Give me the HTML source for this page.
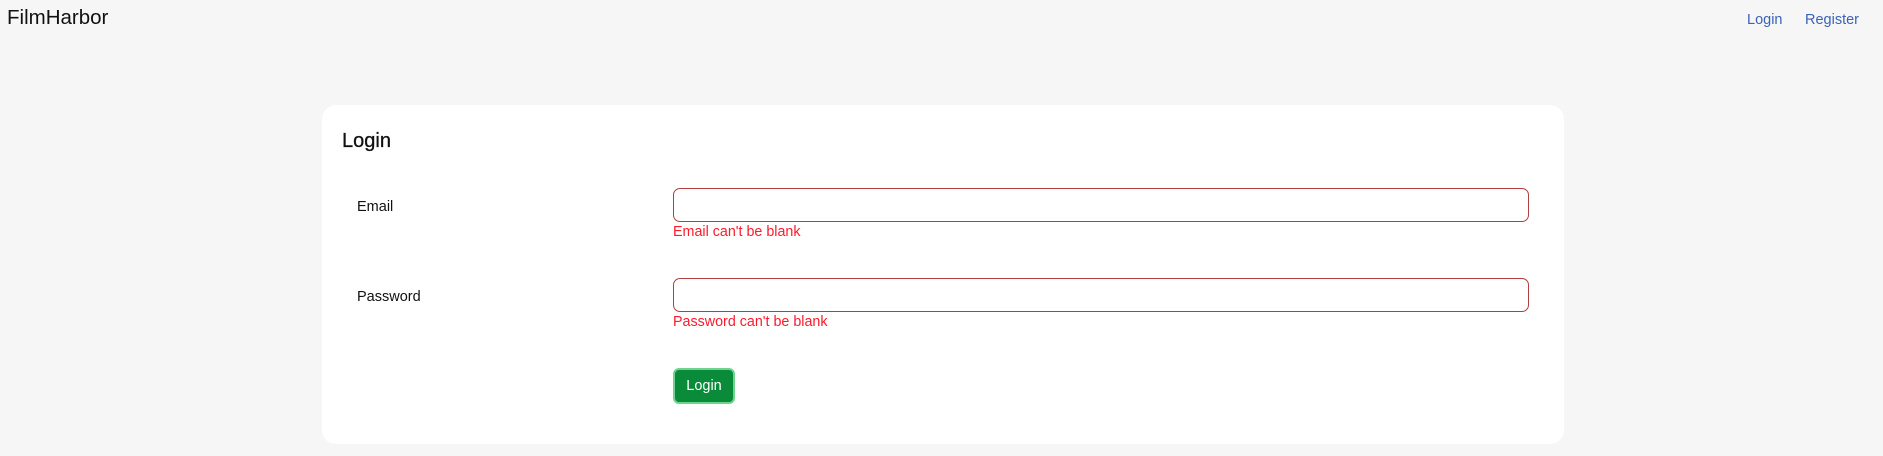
<!DOCTYPE html>
<html><head><style>
body{margin:0;width:1883px;height:456px;background:#f6f6f6;font-family:"Liberation Sans",Arial,sans-serif;position:relative;overflow:hidden}
.a{position:absolute;white-space:nowrap}
.brand{left:7px;top:6px;font-size:20.5px;color:#111}
.nav{top:12px;font-size:14.5px;color:#3a63b8}
.card{position:absolute;left:322px;top:105px;width:1242px;height:339px;background:#fff;border-radius:14px}
.input{position:absolute;left:673px;width:854px;height:32px;border:1px solid #b04040;border-radius:7px;box-sizing:content-box}
.err{color:#ff1a2e;font-size:14.3px;left:673px}
.lbl{font-size:14.5px;color:#111;left:357px}
.btn{position:absolute;left:673px;top:368px;width:58px;height:32px;background:#0a8b3a;border:2px solid #6fd28f;border-radius:6px;color:#fff;font-size:14.5px;text-align:center;line-height:33px}
</style></head><body>
<div class="a brand">FilmHarbor</div>
<div class="a nav" style="left:1747px">Login</div>
<div class="a nav" style="left:1805px">Register</div>
<div class="card"></div>
<div class="a" style="left:342px;top:130px;font-size:20px;color:#111;-webkit-text-stroke:0.3px #111">Login</div>
<div class="a lbl" style="top:199px">Email</div>
<div class="input" style="top:188px"></div>
<div class="a err" style="top:224px">Email can't be blank</div>
<div class="a lbl" style="top:289px">Password</div>
<div class="input" style="top:278px"></div>
<div class="a err" style="top:314px">Password can't be blank</div>
<div class="btn">Login</div>
</body></html>
